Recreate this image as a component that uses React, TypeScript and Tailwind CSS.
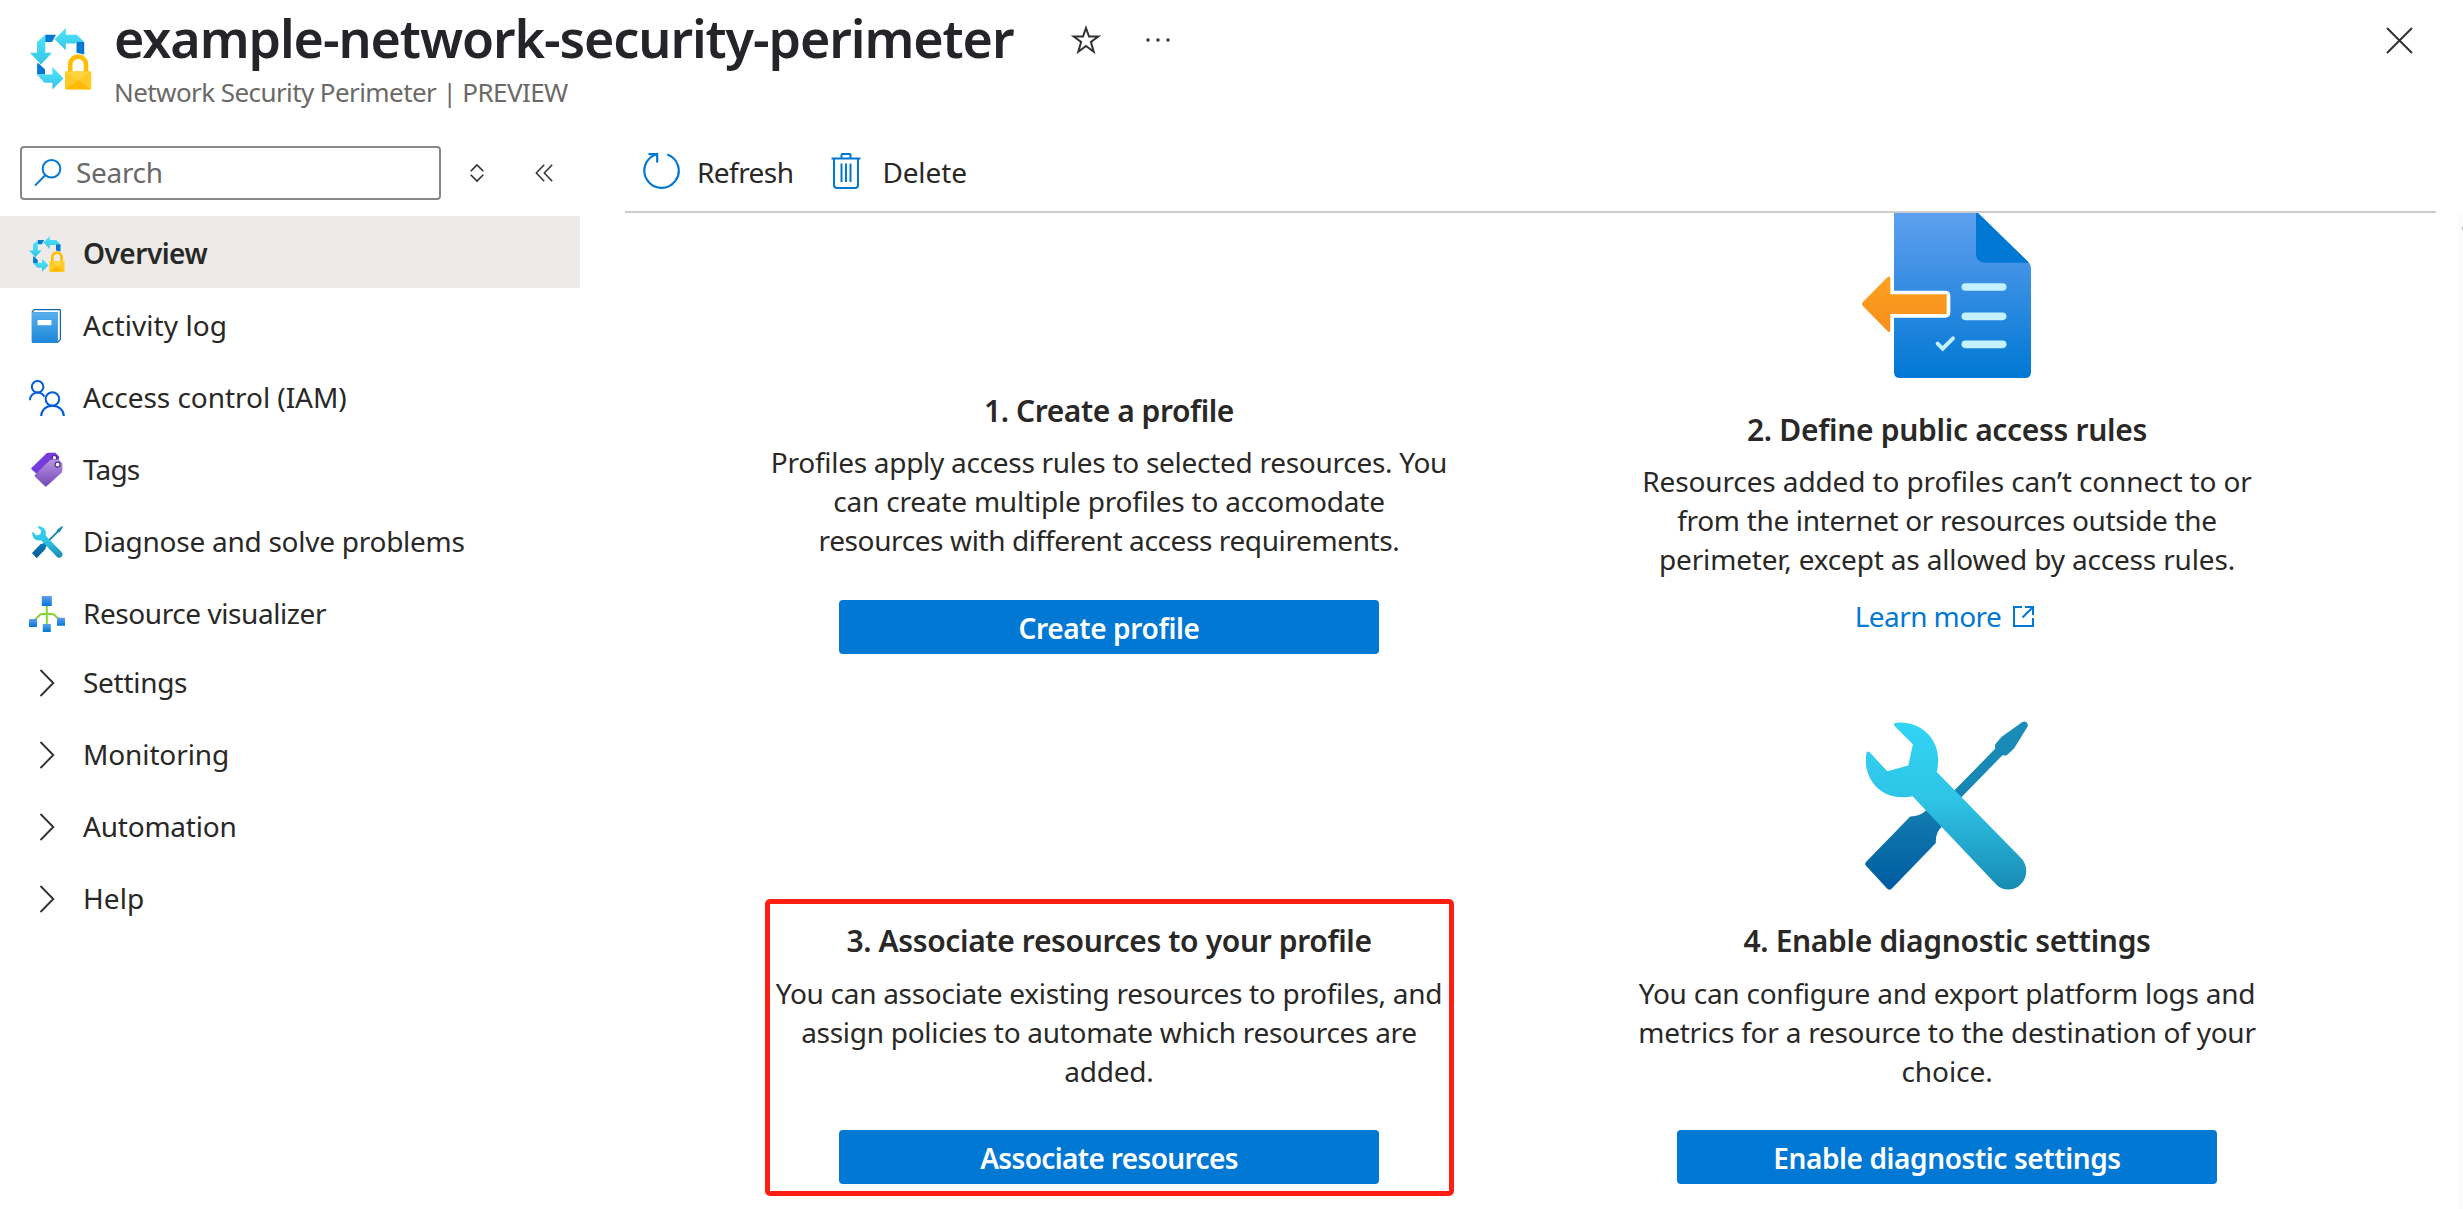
import React from 'react';

type IconProps = { className?: string };

function PerimeterIcon({ className, id }: IconProps & { id: string }) {
  return (
    <svg viewBox="0 0 62 62" className={className} fill="none">
      <defs>
        <linearGradient id={`${id}-cyan`} x1="0" y1="0" x2="0" y2="1">
          <stop offset="0" stopColor="#50e6ff" />
          <stop offset="1" stopColor="#35c3e2" />
        </linearGradient>
      </defs>
      <path d="M15.2 6.8H26L22 14h-6.8Z" fill="#0078d4" />
      <path d="M46.5 14H54.2V26.5L46.5 24.8Z" fill="#0078d4" />
      <path d="M7.1 35.2H8.5L15 41.5V46.5H7.1Z" fill="#0078d4" />
      <path d="M15.2 6.8V24.8H22L11 36.5L0 24.8H7V14Z" fill={`url(#${id}-cyan)`} />
      <path d="M24.7 11.2L35.8 0V6.8H46.8L54.2 14H46.5L45 15.5H35.8V22.3Z" fill={`url(#${id}-cyan)`} />
      <path d="M7 46.5H22.4V39L33.5 50.5L22.4 61.5V54.8H14.4Z" fill={`url(#${id}-cyan)`} />
      <path d="M40.2 44V36.5a7.9 7.9 0 0 1 15.8 0V44" stroke="#ffbd02" strokeWidth="4.6" />
      <rect x="35" y="43.2" width="26.2" height="18.3" rx="1" fill="#ffca25" />
      <path d="M35.5 61.2L48.1 52.5L60.7 61.2Z" fill="#ffb900" />
      <path d="M35.5 43.5H60.7L48.1 52.5Z" fill="#ffd33c" />
    </svg>
  );
}

function ActivityLogIcon({ className }: IconProps) {
  return (
    <svg viewBox="0 0 18 18" className={className}>
      <defs>
        <linearGradient id="log-face" x1="0" y1="0" x2="0" y2="1">
          <stop offset="0" stopColor="#5ab0ee" />
          <stop offset="1" stopColor="#1b87d9" />
        </linearGradient>
      </defs>
      <path d="M2.6 0.5H15.3a.7.7 0 0 1 .7.7V15.9L14.5 17.4H2a.6.6 0 0 1-.6-.6V1.7Z" fill="#1066a8" />
      <path d="M2.7 1.1H15.4V15.8L14.3 16.6V2.1H2Z" fill="#ffffff" />
      <path d="M1.4 2.1H14.3V17.4H2a.6.6 0 0 1-.6-.6Z" fill="url(#log-face)" />
      <rect x="4.3" y="6" width="6.9" height="2.6" fill="#ffffff" />
    </svg>
  );
}

function AccessControlIcon({ className }: IconProps) {
  return (
    <svg viewBox="0 0 18 18" className={className} fill="none" stroke="#015cda" strokeWidth="1">
      <circle cx="4.3" cy="3.4" r="2.9" />
      <path d="M0.5 10.1C0.5 8 2.1 6.3 4.3 6.3C5.9 6.3 7 7.1 7.7 8.4" />
      <circle cx="11.7" cy="9.5" r="3.4" />
      <path d="M6.1 18C6.1 15.1 8.5 12.9 11.7 12.9C14.9 12.9 17.4 15.1 17.4 18" />
    </svg>
  );
}

function TagsIcon({ className }: IconProps) {
  return (
    <svg viewBox="0 0 18 18" className={className}>
      <defs>
        <linearGradient id="tag-front" x1="0" y1="0" x2="0" y2="1">
          <stop offset="0" stopColor="#b796e0" />
          <stop offset="1" stopColor="#7346b5" />
        </linearGradient>
      </defs>
      <path d="M8.7 0.7Q9 0.4 9.5 0.4H13.2L15 2.3V6L4.3 11.4L1.2 8.6Q1 8.3 1.2 8Z" fill="#773adc" />
      <circle cx="12.7" cy="2.9" r="1.15" fill="#ffffff" stroke="#4a2494" strokeWidth=".6" />
      <path d="M10.4 4.1Q10.7 3.8 11.2 3.8H15L16.7 5.6V9.4Q16.7 9.8 16.4 10.2L8.8 17.1Q8.4 17.5 8 17.1L2.9 12.2Q2.6 11.8 2.9 11.5Z" fill="url(#tag-front)" />
      <circle cx="14.3" cy="6.3" r="1.25" fill="#ffffff" stroke="#4f2a91" strokeWidth=".6" />
    </svg>
  );
}

function ToolsIcon({ className, id }: IconProps & { id: string }) {
  return (
    <svg viewBox="135 62 490 508" className={className}>
      <defs>
        <linearGradient id={`${id}-driver`} x1="0" y1="62" x2="0" y2="570" gradientUnits="userSpaceOnUse">
          <stop offset="0" stopColor="#1b8db8" />
          <stop offset=".38" stopColor="#1787b3" />
          <stop offset="1" stopColor="#005ba1" />
        </linearGradient>
        <linearGradient id={`${id}-wrench`} x1="0" y1="62" x2="0" y2="570" gradientUnits="userSpaceOnUse">
          <stop offset="0" stopColor="#32d4f5" />
          <stop offset=".47" stopColor="#2ec4e6" />
          <stop offset="1" stopColor="#198ab3" />
        </linearGradient>
      </defs>
      <path
        d="M608 65Q614 61 620 66Q627 72 623 80L583 145L562 164Q556 168 549 164L372 345L366 380Q346 398 348 429L215 566Q209 572 202 566L138 497Q133 492 138 486L271 349Q300 349 318 331L404 270L527 145Q523 136 529 129L546 109Z"
        fill={`url(#${id}-driver)`}
      />
      <path
        d="M228 67C295 60 355 108 355 178Q355 200 351 215L604 474C625 495 625 530 604 552C583 575 548 574 528 552L278 288C262 291 255 291 243 291C175 289 128 230 139 160Q142 150 149 156L202 213L265 196L279 132L224 77Q218 69 228 67Z"
        fill={`url(#${id}-wrench)`}
      />
    </svg>
  );
}

function VisualizerIcon({ className }: IconProps) {
  return (
    <svg viewBox="0 0 18 18" className={className}>
      <defs>
        <linearGradient id="node-fill" x1="0" y1="0" x2="0" y2="1">
          <stop offset="0" stopColor="#5ea0ef" />
          <stop offset="1" stopColor="#0078d4" />
        </linearGradient>
      </defs>
      <path d="M8.9 4.5V14.5M2.6 12.2L5.5 9.4Q5.9 9 6.5 9H11.6Q12.2 9 12.6 9.4L15.3 12" fill="none" stroke="#86d633" strokeWidth="1" />
      <rect x="6.4" y="0" width="5" height="5" rx=".3" fill="url(#node-fill)" />
      <rect x="0" y="11.5" width="4" height="4" rx=".3" fill="url(#node-fill)" />
      <rect x="6.9" y="14" width="4" height="4" rx=".3" fill="url(#node-fill)" />
      <rect x="14" y="10.9" width="4" height="4" rx=".3" fill="url(#node-fill)" />
    </svg>
  );
}

function AccessRulesIllustration() {
  return (
    <svg viewBox="126 39 507 495" className="mr-[2px] h-[165px] w-[169px]">
      <defs>
        <linearGradient id="doc-fill" x1="0" y1="0" x2="0" y2="1">
          <stop offset="0" stopColor="#5ea0ef" />
          <stop offset=".18" stopColor="#4f98ea" />
          <stop offset="1" stopColor="#0078d4" />
        </linearGradient>
        <linearGradient id="arrow-fill" x1="0" y1="0" x2="0" y2="1">
          <stop offset="0" stopColor="#faa21d" />
          <stop offset="1" stopColor="#f78d1e" />
        </linearGradient>
      </defs>
      <path d="M222 39H474L627 188Q633 195 633 203V516Q633 534 615 534H240Q222 534 222 516Z" fill="url(#doc-fill)" />
      <path d="M468 39H474L627 188H496Q468 188 468 160Z" fill="#0078d4" />
      <path d="M212 272H375Q391 272 391 288V337Q391 353 375 353H212Z" fill="#ffffff" />
      <path d="M203 231Q211 226 211 236V283H380V342H211V389Q211 399 203 394L128 317Q124 312 128 307Z" fill="url(#arrow-fill)" />
      <g stroke="#c3f1ff" strokeWidth="23" strokeLinecap="round">
        <path d="M436 261H548" />
        <path d="M436 349H548" />
        <path d="M436 433H548" />
      </g>
      <path d="M353 431L368 446L399 415" fill="none" stroke="#c3f1ff" strokeWidth="12" strokeLinecap="round" />
    </svg>
  );
}

function ChevronRight() {
  return (
    <svg viewBox="0 0 36 36" className="h-9 w-9" fill="none" stroke="#323130" strokeWidth="1.9">
      <path d="M11.5 5L24.3 18L11.5 31" />
    </svg>
  );
}

const resourceItems = [
  { label: 'Overview', icon: <PerimeterIcon id="nav" className="h-9 w-9" />, text: 'font-semibold tracking-[-0.5px]', active: true },
  { label: 'Activity log', icon: <ActivityLogIcon className="h-9 w-9" />, text: 'tracking-[0.08px]' },
  { label: 'Access control (IAM)', icon: <AccessControlIcon className="h-9 w-9" />, text: 'tracking-[-0.04px]' },
  { label: 'Tags', icon: <TagsIcon className="h-9 w-9" />, text: 'tracking-[-0.8px]' },
  { label: 'Diagnose and solve problems', icon: <ToolsIcon id="nav-tools" className="h-[32px] w-[31px]" />, text: 'tracking-[-0.26px]' },
  { label: 'Resource visualizer', icon: <VisualizerIcon className="h-9 w-9" />, text: 'tracking-[-0.43px]' },
];

const groups = [
  { label: 'Settings', text: 'tracking-[-0.29px]' },
  { label: 'Monitoring', text: 'tracking-[-0.12px]' },
  { label: 'Automation', text: 'tracking-[-0.21px]' },
  { label: 'Help', text: 'tracking-[0.1px]' },
];

function NavRow({ icon, label, text, active }: { icon: React.ReactNode; label: string; text: string; active?: boolean }) {
  return (
    <a className={`flex h-[72px] w-[580px] items-center pl-[29px] ${active ? 'bg-[#edebe9]' : ''}`}>
      <span className="mt-1 flex h-9 w-9 items-center justify-center">{icon}</span>
      <span className={`ml-[18px] pt-[2px] whitespace-nowrap ${text}`}>{label}</span>
    </a>
  );
}

function Heading({ children, className }: { children: React.ReactNode; className: string }) {
  return <h2 className={`text-[30px] leading-[40px] font-semibold whitespace-nowrap ${className}`}>{children}</h2>;
}

function Lines({ lines, className }: { lines: [string, string][]; className: string }) {
  return (
    <p className={`text-center leading-[39px] ${className}`}>
      {lines.map(([line, tracking]) => (
        <span key={line} className={`block whitespace-nowrap ${tracking}`}>
          {line}
        </span>
      ))}
    </p>
  );
}

function PrimaryButton({ children, className }: { children: React.ReactNode; className: string }) {
  return (
    <button className={`flex h-[54px] w-[540px] shrink-0 items-center justify-center rounded-[4px] bg-[#0078d4] pt-[2px] font-semibold text-white ${className}`}>
      {children}
    </button>
  );
}

export default function App() {
  return (
    <div className="flex h-[1209px] w-full flex-col overflow-hidden bg-white font-['Noto_Sans',sans-serif] text-[28px] leading-[39px] text-[#292827]">
      <header className="flex h-[136px] shrink-0 items-start">
        <PerimeterIcon id="header" className="mt-[28px] ml-[30px] h-[62px] w-[62px]" />
        <div className="ml-[22px] w-[957px] pt-[2px]">
          <h1 className="text-[52px] leading-[72px] font-semibold tracking-[-1.09px] whitespace-nowrap text-[#242429]">
            example-network-security-perimeter
          </h1>
          <p className="text-[26px] leading-[36px] tracking-[-0.58px] whitespace-nowrap text-[#6b6967]">
            Network Security Perimeter | PREVIEW
          </p>
        </div>
        <svg viewBox="0 0 30 30" className="mt-[25px] h-[30px] w-[30px]" fill="none" stroke="#323130" strokeWidth="2">
          <path d="M15 3L18 11.6H27.3L19.9 17L22.7 26.7L15 21L7.3 26.7L10.1 17L2.7 11.6H12Z" />
        </svg>
        <svg viewBox="0 0 24 4" className="mt-[38px] ml-[45px] h-1 w-6" fill="#323130">
          <circle cx="2" cy="2" r="1.7" />
          <circle cx="12" cy="2" r="1.7" />
          <circle cx="22" cy="2" r="1.7" />
        </svg>
        <svg viewBox="0 0 27 27" className="mt-[27px] mr-[50px] ml-auto h-[27px] w-[27px]" fill="none" stroke="#323130" strokeWidth="2">
          <path d="M1 1L26 26M26 1L1 26" />
        </svg>
      </header>

      <div className="flex min-h-0 flex-1">
        <aside className="w-[625px] shrink-0">
          <div className="flex h-20 items-start pt-[10px] pl-5">
            <div className="flex h-[54px] w-[421px] items-center rounded-[4px] border-2 border-[#8a8886] pl-[12px]">
              <svg viewBox="0 0 28 28" className="h-7 w-7" fill="none" stroke="#0078d4" strokeWidth="2">
                <circle cx="17.5" cy="9.8" r="8.8" />
                <path d="M11.2 16.2L1 26.6" />
              </svg>
              <span className="ml-[14px] pb-[2px] tracking-[-0.33px] text-[#6b6967]">Search</span>
            </div>
            <svg viewBox="0 0 14 18" className="mt-[18px] ml-[29px] h-[18px] w-[14px]" fill="none" stroke="#323130" strokeWidth="1.6">
              <path d="M0.7 7.2L7 0.9L13.3 7.2M0.7 10.8L7 17.1L13.3 10.8" />
            </svg>
            <svg viewBox="0 0 18 18" className="mt-[18px] ml-[51px] h-[18px] w-[18px]" fill="none" stroke="#323130" strokeWidth="1.5">
              <path d="M9.2 0.8L1.3 9L9.2 17.2M17.2 0.8L9.3 9L17.2 17.2" />
            </svg>
          </div>
          <nav>
            {resourceItems.map((item) => (
              <NavRow key={item.label} {...item} />
            ))}
            <div className="-mt-[3px]">
              {groups.map((item) => (
                <NavRow key={item.label} icon={<ChevronRight />} {...item} />
              ))}
            </div>
          </nav>
        </aside>

        <main className="flex min-w-0 flex-1 flex-col">
          <div className="mr-[27px] flex h-[77px] shrink-0 items-center border-b-2 border-[#cccccc] pb-[5px] pl-[18px]">
            <svg viewBox="0 1 38 38" className="h-[38px] w-[38px] shrink-0" fill="none" stroke="#0078d4" strokeWidth="2.2">
              <path d="M24.3 3.5A17.2 17.2 0 1 1 13.7 3.2" />
              <path d="M5.5 3.1H14.2V11.5" />
            </svg>
            <span className="ml-[16px] pt-[2px] tracking-[-0.57px]">Refresh</span>
            <svg viewBox="0 1 30 38" className="ml-[38px] h-[38px] w-[30px] shrink-0" fill="none" stroke="#0078d4" strokeWidth="2">
              <path d="M0.5 7.5H29.5M10.5 7.5V4Q10.5 3 11.5 3H18.5Q19.5 3 19.5 4V7.5" />
              <path d="M3 7.5V34Q3 37 6 37H24Q27 37 27 34V7.5" />
              <path d="M10.5 12.5V31M15 12.5V31M19.5 12.5V31" />
            </svg>
            <span className="ml-[21px] pt-[2px] tracking-[-0.12px]">Delete</span>
          </div>

          <div className="flex min-h-0 flex-1 justify-between">
            <div className="ml-[65px] grid w-[1676px] grid-cols-2 grid-rows-[477px_1fr]">
              <section className="flex flex-col items-center pt-[178px]">
                <Heading className="tracking-[-0.43px]">1. Create a profile</Heading>
                <Lines
                  className="mt-[12px]"
                  lines={[
                    ['Profiles apply access rules to selected resources. You', 'tracking-[-0.28px]'],
                    ['can create multiple profiles to accomodate', 'tracking-[-0.2px]'],
                    ['resources with different access requirements.', 'tracking-[-0.39px]'],
                  ]}
                />
                <PrimaryButton className="mt-10 tracking-[-0.37px]">Create profile</PrimaryButton>
              </section>

              <section className="flex flex-col items-center">
                <AccessRulesIllustration />
                <Heading className="mt-8 tracking-[-0.31px]">2. Define public access rules</Heading>
                <Lines
                  className="mt-[12px]"
                  lines={[
                    ['Resources added to profiles can’t connect to or', 'tracking-[-0.12px]'],
                    ['from the internet or resources outside the', 'tracking-[-0.34px]'],
                    ['perimeter, except as allowed by access rules.', 'tracking-[-0.17px]'],
                  ]}
                />
                <a className="mt-[18px] flex items-center pr-[5px] text-[#0078d4]">
                  <span className="tracking-[-0.58px]">Learn more</span>
                  <svg viewBox="0 0 21 21" className="ml-[12px] h-[21px] w-[21px]" fill="none" stroke="#0078d4" strokeWidth="2">
                    <path d="M9 1H1V20H20V12M12 1H20V9M20 1L9.5 11.5" />
                  </svg>
                </a>
              </section>

              <section className="flex flex-col items-center pt-[209px]">
                <div className="flex h-[297px] w-[689px] flex-col items-center rounded-[5px] border-[5px] border-[#ff1f12] pt-[17px]">
                  <Heading className="tracking-[-0.36px]">3. Associate resources to your profile</Heading>
                  <Lines
                    className="mt-[13px]"
                    lines={[
                      ['You can associate existing resources to profiles, and', 'tracking-[-0.29px]'],
                      ['assign policies to automate which resources are', 'tracking-[-0.29px]'],
                      ['added.', 'tracking-[-0.23px]'],
                    ]}
                  />
                  <PrimaryButton className="mt-[39px] tracking-[-0.64px]">Associate resources</PrimaryButton>
                </div>
              </section>

              <section className="flex flex-col items-center pt-[31px]">
                <ToolsIcon id="tools" className="mr-[2px] h-[169px] w-[163px]" />
                <Heading className="mt-[31px] tracking-[-0.33px]">4. Enable diagnostic settings</Heading>
                <Lines
                  className="mt-[13px]"
                  lines={[
                    ['You can configure and export platform logs and', 'tracking-[-0.24px]'],
                    ['metrics for a resource to the destination of your', 'tracking-[-0.25px]'],
                    ['choice.', 'tracking-[-0.06px]'],
                  ]}
                />
                <PrimaryButton className="mt-[39px] tracking-[-0.41px]">Enable diagnostic settings</PrimaryButton>
              </section>
            </div>
            <div className="flex w-[5px] justify-end bg-[#fcfcfc] pt-[14px]">
              <span className="h-[3px] w-px bg-[#b5b5b5]" />
            </div>
          </div>
        </main>
      </div>
    </div>
  );
}
